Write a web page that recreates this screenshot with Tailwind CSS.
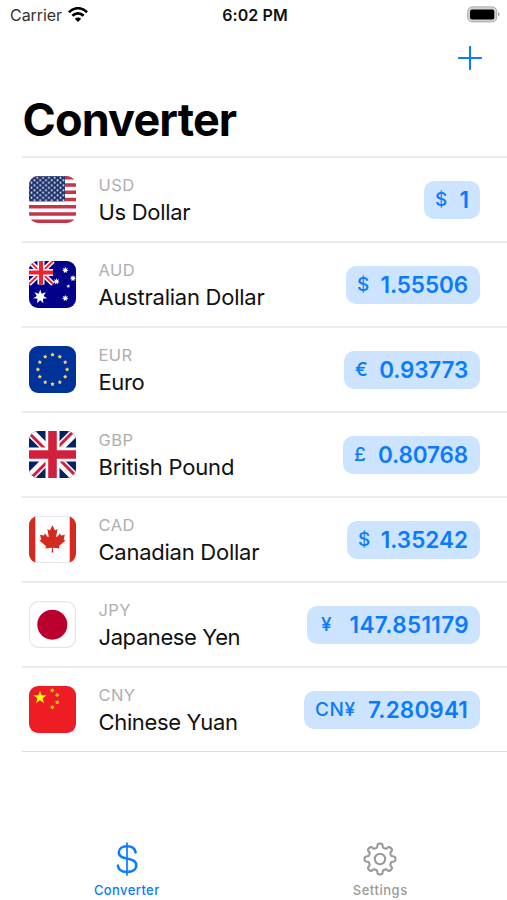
<!DOCTYPE html>
<html lang="en">
<head>
<meta charset="utf-8">
<title>Converter</title>
<script src="https://cdn.jsdelivr.net/npm/@tailwindcss/browser@4"></script>
</head>
<body class="bg-white">
<svg width="0" height="0" class="absolute">
  <defs>
    <polygon id="star5" points="0,-1 .225,-.309 .951,-.309 .363,.118 .588,.809 0,.382 -.588,.809 -.363,.118 -.951,-.309 -.225,-.309"/>
    <polygon id="fat5" points="0,-1 .35,-.48 .951,-.309 .56,.18 .588,.809 0,.6 -.588,.809 -.56,.18 -.951,-.309 -.35,-.48"/>
    <polygon id="star7" points="0,-1 .2,-.42 .78,-.62 .46,-.1 .97,.22 .37,.29 .43,.9 0,.47 -.43,.9 -.37,.29 -.97,.22 -.46,-.1 -.78,-.62 -.2,-.42"/>
    <pattern id="stars" width="5.8" height="5" patternUnits="userSpaceOnUse" x="1" y="0.5">
      <circle cx="1.5" cy="1.25" r="1" fill="#fff"/><circle cx="4.4" cy="3.75" r="1" fill="#fff"/>
    </pattern>
  </defs>
</svg>
<div class="w-[507px] h-[900px] flex flex-col bg-white font-[Inter,'Liberation_Sans',sans-serif] text-black overflow-hidden">
  <header class="h-[156px] shrink-0 flex flex-col">
    <div class="h-[30px] grid grid-cols-3 items-center pl-[10px] pr-[7px]">
      <div class="flex items-center gap-[6px]">
        <span class="text-[16px] leading-[30px] text-[#333] tracking-[-0.05px]">Carrier</span>
        <svg class="-mt-[2px]" width="20" height="15" viewBox="0 0 20 15" fill="none" stroke="#000" stroke-width="2.7"><path d="M1 5.2C6-.1 14-.1 19 5.2"/><path d="M4.4 8.8c3.2-3.2 8-3.2 11.2 0"/><path d="M10 15 6.8 11.7c1.8-1.7 4.6-1.7 6.4 0z" fill="#000" stroke="none"/></svg>
      </div>
      <div class="text-center text-[16px] leading-[30px] font-semibold tracking-[0.1px] text-[#111] whitespace-nowrap">6:02 PM</div>
      <svg class="justify-self-end -mt-[2px]" width="33" height="17" viewBox="0 0 33 17"><rect x=".7" y=".9" width="29" height="15" rx="4.5" fill="#d2d2d2" stroke="#aaa" stroke-width="1"/><rect x="3" y="3.4" width="24.3" height="10" rx="2" fill="#000"/><path d="M31.2 6.3c1.8.8 1.8 3.3 0 4.1z" fill="#999"/></svg>
    </div>
    <div class="h-[56px] flex justify-end items-center pr-[25px]">
      <svg width="24" height="24" viewBox="0 0 24 24" stroke="#0a7aff" stroke-width="2.1" stroke-linecap="round"><path d="M12 1v22M1 12h22"/></svg>
    </div>
    <h1 class="pl-[22.5px] h-[68px] text-[45px] leading-[68px] font-bold tracking-[-0.85px]">Converter</h1>
  </header>

  <main class="ml-[22px] h-[596px] shrink-0 flex flex-col border-b border-[#dedede]">
    <div class="h-[85px] border-t-2 border-[#ebebeb] flex items-center pl-[6.500px] pr-[27px]">
      <svg class="rounded-[9px]" width="47" height="47" viewBox="0 0 47 47"><rect width="47" height="47" fill="#fff"/><path d="M0 1.8h47M0 9h47M0 16.3h47M0 23.5h47M0 30.7h47M0 38h47M0 45.2h47" stroke="#c4354a" stroke-width="3.6"/><rect width="36" height="25.3" fill="#1b2f6b"/><rect width="36" height="25.3" fill="url(#stars)"/></svg>
      <div class="ml-[23px] flex-1"><div class="text-[16.5px] leading-[24px] text-[#aeaeb2] tracking-[0.4px]">USD</div><div class="text-[22px] leading-[30px] text-[#111] tracking-[-0.3px]">Us Dollar</div></div>
      <div class="w-[56px] h-[38px] rounded-[10px] bg-[#cce4ff] text-[#0a7aff] flex items-center justify-between pl-[11px] pr-[11px]"><span class="text-[19px] pt-[2px] font-medium">$</span><span class="text-[22.5px] font-semibold">1</span></div>
    </div>
    <div class="h-[85px] border-t-2 border-[#ebebeb] flex items-center pl-[6.500px] pr-[27px]">
      <svg class="rounded-[9px]" width="47" height="47" viewBox="0 0 47 47"><rect width="47" height="47" fill="#00008b"/><path d="M0 0 24 23M24 0 0 23" stroke="#fff" stroke-width="5"/><path d="M0 0 24 23M24 0 0 23" stroke="#ef2030" stroke-width="1.8"/><path d="M12 0v23.5M0 11.5h24" stroke="#fff" stroke-width="7"/><path d="M12 0v23.5M0 11.5h24" stroke="#ef2030" stroke-width="4"/><g fill="#fff"><use href="#star7" transform="translate(11.2 35.7) scale(7.3)"/><use href="#star7" transform="translate(36.3 9.2) scale(3.4)"/><use href="#star7" transform="translate(27.5 20.4) scale(3.4)"/><use href="#star7" transform="translate(44 17.3) scale(3.4)"/><use href="#star7" transform="translate(36.3 37.2) scale(3.4)"/><use href="#star5" transform="translate(39.3 25.2) scale(2.2)"/></g></svg>
      <div class="ml-[23px] flex-1"><div class="text-[16.5px] leading-[24px] text-[#aeaeb2] tracking-[0.4px]">AUD</div><div class="text-[22px] leading-[30px] text-[#111] tracking-[-0.25px]">Australian Dollar</div></div>
      <div class="w-[134px] h-[38px] rounded-[10px] bg-[#cce4ff] text-[#0a7aff] flex items-center justify-between pl-[11px] pr-[12px]"><span class="text-[19px] pt-[2px] font-medium">$</span><span class="text-[22.5px] font-semibold tracking-[-0.1px]">1.55506</span></div>
    </div>
    <div class="h-[85px] border-t-2 border-[#ebebeb] flex items-center pl-[6.500px] pr-[27px]">
      <svg class="rounded-[9px]" width="47" height="47" viewBox="0 0 47 47"><rect width="47" height="47" fill="#039"/><g fill="#f2cf6a"><use href="#fat5" transform="translate(23.5 8.8) scale(2.2)"/><use href="#fat5" transform="translate(30.8 10.8) scale(2.2)"/><use href="#fat5" transform="translate(36.2 16.2) scale(2.2)"/><use href="#fat5" transform="translate(38.1 23.5) scale(2.2)"/><use href="#fat5" transform="translate(36.2 30.8) scale(2.2)"/><use href="#fat5" transform="translate(30.8 36.2) scale(2.2)"/><use href="#fat5" transform="translate(23.5 38.1) scale(2.2)"/><use href="#fat5" transform="translate(16.2 36.2) scale(2.2)"/><use href="#fat5" transform="translate(10.8 30.8) scale(2.2)"/><use href="#fat5" transform="translate(8.9 23.5) scale(2.2)"/><use href="#fat5" transform="translate(10.8 16.2) scale(2.2)"/><use href="#fat5" transform="translate(16.2 10.8) scale(2.2)"/></g></svg>
      <div class="ml-[23px] flex-1"><div class="text-[16.5px] leading-[24px] text-[#aeaeb2] tracking-[0.4px]">EUR</div><div class="text-[22px] leading-[30px] text-[#111] tracking-[-0.4px]">Euro</div></div>
      <div class="w-[136px] h-[38px] rounded-[10px] bg-[#cce4ff] text-[#0a7aff] flex items-center justify-between pl-[11px] pr-[12px]"><span class="text-[19px] pt-[2px] font-medium">€</span><span class="text-[22.5px] font-semibold tracking-[-0.2px]">0.93773</span></div>
    </div>
    <div class="h-[85px] border-t-2 border-[#ebebeb] flex items-center pl-[6.500px] pr-[27px]">
      <svg class="rounded-[9px]" width="47" height="47" viewBox="0 0 47 47"><rect width="47" height="47" fill="#012169"/><path d="M0 0 47 47M47 0 0 47" stroke="#fff" stroke-width="9"/><path d="M-1 1 22 24M25 23 48 46M46-1 23 22M24 25 1 48" stroke="#d0203c" stroke-width="3"/><path d="M23.5 0v47M0 23.5h47" stroke="#fff" stroke-width="14"/><path d="M23.5 0v47M0 23.5h47" stroke="#d0203c" stroke-width="8.6"/></svg>
      <div class="ml-[23px] flex-1"><div class="text-[16.5px] leading-[24px] text-[#aeaeb2] tracking-[0.4px]">GBP</div><div class="text-[22px] leading-[30px] text-[#111] tracking-[-0.2px]">British Pound</div></div>
      <div class="w-[137px] h-[38px] rounded-[10px] bg-[#cce4ff] text-[#0a7aff] flex items-center justify-between pl-[11px] pr-[12px]"><span class="text-[19px] pt-[2px] font-medium">£</span><span class="text-[22.5px] font-semibold tracking-[-0.15px]">0.80768</span></div>
    </div>
    <div class="h-[85px] border-t-2 border-[#ebebeb] flex items-center pl-[6.500px] pr-[27px]">
      <svg class="rounded-[9px]" width="47" height="47" viewBox="0 0 47 47"><rect width="47" height="47" fill="#d52b1e"/><rect x="6.3" width="34.4" height="47" fill="#fff"/><path d="M6.3.5h34.4M6.3 46.5h34.4" stroke="#e8e8e8"/><path transform="translate(2.800 -.6) scale(.88 .94)" fill="#d52b1e" d="M23.5 10.5l-2.6 4.8c-.3.5-.8.5-1.3.2l-1.9-1 1.4 7.4c.3 1.3-.7 1.3-1.1.7L14.700 19l-.5 1.900c-.1.300-.4.500-.8.500L9.300 20.600l1.100 3.900c.2.800.4 1.200-.200 1.400l-1.500.700 7 5.700c.300.200.4.600.3 1l-.6 2 7-.800c.300 0 .500.200.500.500l-.4 4.500h1.900l-.4-4.500c0-.300.2-.500.5-.500l7 .8-.6-2c-.1-.4 0-.8.3-1l7-5.700-1.500-.7c-.6-.200-.4-.600-.200-1.400l1.100-3.900-4.100.8c-.400 0-.700-.2-.8-.5l-.5-1.900-3.300 3.600c-.5.600-1.400.6-1.100-.7l1.400-7.400-1.900 1c-.5.300-1 .3-1.300-.2z"/></svg>
      <div class="ml-[23px] flex-1"><div class="text-[16.5px] leading-[24px] text-[#aeaeb2] tracking-[0.4px]">CAD</div><div class="text-[22px] leading-[30px] text-[#111] tracking-[-0.25px]">Canadian Dollar</div></div>
      <div class="w-[133px] h-[38px] rounded-[10px] bg-[#cce4ff] text-[#0a7aff] flex items-center justify-between pl-[11px] pr-[12px]"><span class="text-[19px] pt-[2px] font-medium">$</span><span class="text-[22.5px] font-semibold">1.35242</span></div>
    </div>
    <div class="h-[85px] border-t-2 border-[#ebebeb] flex items-center pl-[6.500px] pr-[27px]">
      <svg width="47" height="47" viewBox="0 0 47 47"><rect x=".6" y=".6" width="45.8" height="45.8" rx="9" fill="#fff" stroke="#e8e8e8" stroke-width="1.4"/><circle cx="23.3" cy="23.7" r="15" fill="#bc002d"/></svg>
      <div class="ml-[23px] flex-1"><div class="text-[16.5px] leading-[24px] text-[#aeaeb2] tracking-[0.4px]">JPY</div><div class="text-[22px] leading-[30px] text-[#111] tracking-[-0.4px]">Japanese Yen</div></div>
      <div class="w-[173px] h-[38px] rounded-[10px] bg-[#cce4ff] text-[#0a7aff] flex items-center justify-between pl-[14px] pr-[11px]"><span class="text-[19px] pt-[2px] font-medium">¥</span><span class="text-[22.5px] font-semibold tracking-[0.35px]">147.851179</span></div>
    </div>
    <div class="h-[85px] border-t-2 border-[#ebebeb] flex items-center pl-[6.500px] pr-[27px]">
      <svg class="rounded-[9px]" width="47" height="47" viewBox="0 0 47 47"><rect width="47" height="47" fill="#ee1c25"/><g fill="#ff0"><use href="#star5" transform="translate(11 11.500) scale(7)"/></g><g fill="#ffd400"><use href="#fat5" transform="translate(23.200 4.300) rotate(20) scale(2.300)"/><use href="#fat5" transform="translate(28.200 9) rotate(40) scale(2.300)"/><use href="#fat5" transform="translate(28.200 16.300) scale(2.300)"/><use href="#fat5" transform="translate(23.300 21.200) rotate(20) scale(2.300)"/></g></svg>
      <div class="ml-[23px] flex-1"><div class="text-[16.5px] leading-[24px] text-[#aeaeb2] tracking-[0.4px]">CNY</div><div class="text-[22px] leading-[30px] text-[#111] tracking-[-0.35px]">Chinese Yuan</div></div>
      <div class="w-[176px] h-[38px] rounded-[10px] bg-[#cce4ff] text-[#0a7aff] flex items-center justify-between pl-[11px] pr-[12px]"><span class="text-[19px] pt-[2px] font-medium tracking-[0.6px]">CN¥</span><span class="text-[22.5px] font-semibold tracking-[0.15px]">7.280941</span></div>
    </div>
  </main>

  <nav class="flex-1 grid grid-cols-2 items-end">
    <div class="flex flex-col items-center text-[#0a7aff] gap-[3px]">
      <svg width="36" height="36" viewBox="0 0 36 36" fill="none" stroke="currentColor" stroke-linecap="round"><path d="M18 2v32" stroke-width="1.700"/><path d="M26.600 11.500C26 7.300 22.700 5.300 18 5.300c-4.900 0-8.200 2.500-8.200 6.200 0 8.600 17.500 3.600 17.500 12.800 0 4.200-3.700 6.700-9.200 6.700-5.400 0-8.700-2.300-9.200-6.400" stroke-width="2.500"/></svg>
      <span class="text-[13px] leading-[20px] font-medium tracking-[0.4px]">Converter</span>
    </div>
    <div class="flex flex-col items-center text-[#999] gap-[3px]">
      <svg width="36" height="36" viewBox="-18 -18 36 36" fill="none" stroke="currentColor" stroke-width="2.100" stroke-linejoin="round"><circle r="5.200"/><path id="gear"/></svg>
      <span class="text-[13px] leading-[20px] font-medium tracking-[0.55px]">Settings</span>
    </div>
  </nav>
</div>
<script>
  // Smooth eight-toothed outline for the settings icon
  let outline = "";
  for (let i = 0; i < 240; i++) {
    const a = i * Math.PI / 120;
    const r = 13.5 + 1.9 * Math.tanh(2.4 * Math.cos(8 * a)) / Math.tanh(2.4);
    outline += (i ? "L" : "M") + (r * Math.sin(a)).toFixed(2) + " " + (-r * Math.cos(a)).toFixed(2);
  }
  document.getElementById("gear").setAttribute("d", outline + "Z");
</script>
</body>
</html>
